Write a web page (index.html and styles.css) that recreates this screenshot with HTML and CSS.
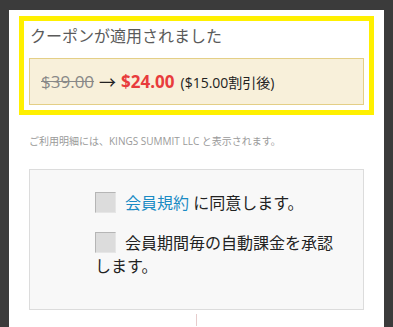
FILE: index.html
```html
<!DOCTYPE html>
<html lang="ja">
<head>
<meta charset="utf-8">
<link rel="stylesheet" href="styles.css">
</head>
<body>
<div class="panel">
  <div class="highlight">
    <div class="title">クーポンが適用されました</div>
    <div class="price-box">
      <span class="old">$39.00</span>
      <span class="arrow">→</span>
      <span class="new">$24.00</span>
      <span class="disc">($15.00割引後)</span>
    </div>
  </div>
  <p class="note">ご利用明細には、KINGS SUMMIT LLC と表示されます。</p>
  <div class="agree">
    <div class="agree-inner">
      <div class="row"><span class="check"></span><a class="link">会員規約</a> に同意します。</div>
      <div class="row"><span class="check"></span>会員期間毎の自動課金を承認します。</div>
    </div>
  </div>
  <div class="divider"></div>
</div>
</body>
</html>
```
FILE: styles.css
```css
html, body {
  margin: 0;
  padding: 0;
  background: #3b3b3b;
  height: 100%;
  overflow: hidden;
}
body {
  font-family: "Open Sans", "Noto Sans CJK JP", sans-serif;
}
.panel {
  margin: 10px 0 0 9px;
  width: 375px;
  height: calc(100% - 10px);
  background: #ffffff;
  padding-top: 6px;
  box-sizing: border-box;
}
.highlight {
  margin: 0 10px;
  border: 5px solid #fff000;
  padding: 4px 5px 5px 5px;
}
.title {
  font-size: 16px;
  line-height: 22px;
  color: #5a5a5a;
  padding-left: 1px;
  margin-bottom: 11px;
}
.price-box {
  background: #f8f0da;
  border: 1px solid #e4cf86;
  height: 45px;
  display: flex;
  align-items: center;
  padding-left: 11px;
  font-size: 17px;
  gap: 5px;
}
.old {
  color: #888;
  text-decoration: line-through;
}
.arrow {
  color: #222;
}
.new {
  color: #e83c3c;
  font-weight: bold;
}
.disc {
  color: #222;
  font-size: 14px;
  margin-left: 1px;
}
.note {
  margin: 19px 0 0 20px;
  font-size: 10px;
  line-height: 14px;
  color: #9a9a9a;
}
.agree {
  margin: 21px 0 0 20px;
  width: 335px;
  height: 141px;
  box-sizing: border-box;
  background: #f8f8f8;
  border: 1px solid #dcdcdc;
  padding: 22px 0 0 65px;
}
.agree-inner {
  width: 245px;
}
.row {
  font-size: 16px;
  line-height: 23px;
  color: #222;
  margin-bottom: 17px;
}
.row:last-child {
  margin-bottom: 0;
}
.check {
  display: inline-block;
  width: 19px;
  height: 19px;
  background: #dcdcdc;
  border: 1px solid #b5b5b5;
  border-right-color: #e6e6e6;
  border-bottom-color: #e6e6e6;
  vertical-align: -4px;
  margin-right: 9px;
}
.link {
  color: #1a8bc4;
  text-decoration: none;
}
.divider {
  width: 1px;
  height: 12px;
  background: #e6cccc;
  margin: 4px 0 0 187px;
}
```
